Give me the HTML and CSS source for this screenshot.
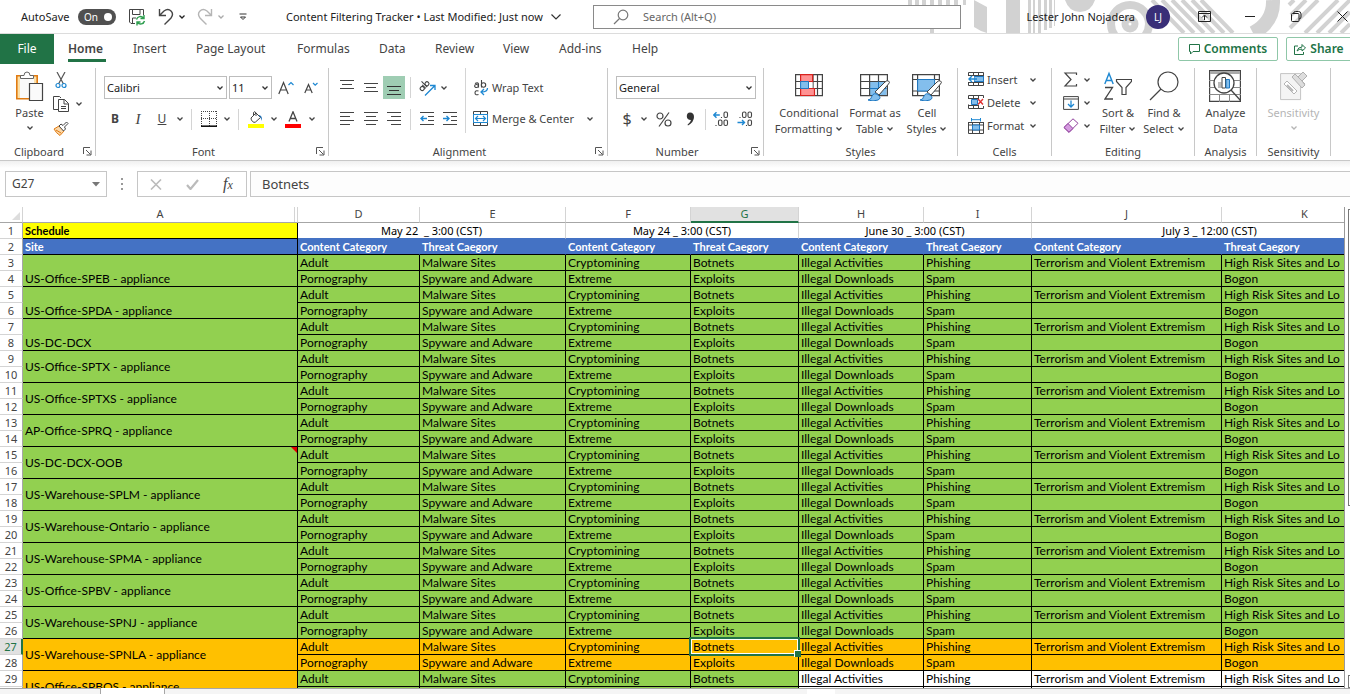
FILE: index.html
```html
<!DOCTYPE html>
<html lang="en">
<head>
<meta charset="utf-8">
<title>Content Filtering Tracker</title>
<link rel="stylesheet" href="styles.css">
</head>
<body>
<svg class="defs" aria-hidden="true">
  <symbol id="chev" viewBox="0 0 8 6"><path d="M1.5 1.5 4 4 6.500 1.500" fill="none" stroke="currentColor" stroke-width="1.300"/></symbol>
  <symbol id="launch" viewBox="0 0 9 9"><path d="M.5 7V.5H7M3 3l4.500 4.500M8 3.500V8H3.500" fill="none" stroke="currentColor"/></symbol>
</svg>

<header class="titlebar">
  <svg class="decor" viewBox="0 0 450 33" aria-hidden="true">
    <g fill="#d2d2d2">
      <path d="M8 0h4v5H8zM15 0h4v5h-4zM22 0h4v5h-4zM30 0h4v33h-4zM38 0h4v5h-4zM46 0h4v5h-4zM54 0h4v5h-4zM63 0h3v5h-3zM74 0l13 7v26l-6-2-7-4zM106 0h14v33h-14z"/>
      <path d="M128 0h3v33h-3zM133 0h2v33h-2zM138 0h3v33h-3zM144 0h3v30h-3zM149 0h3v28h-3zM154 0h1v26h-1z"/>
      <path d="M165 0h30q-4 12-15 12T165 0z"/>
    </g>
    <g fill="none" stroke="#d2d2d2">
      <circle cx="230" cy="24" r="19" stroke-width="8"/><circle cx="230" cy="24" r="5" stroke-width="7"/>
      <path d="M252 0 284 33M262 0l32 33M272 0l32 33M282 0l32 33M292 0l32 33M301 0l32 33" stroke-width="4"/>
      <path d="M373 0q1 22-20 33" stroke-width="14"/>
      <path d="M389 5l5-5M391 15 406 0M390 28 418 0M405 33 438 0M417 33l33-33M429 33l21-21M441 33l9-9" stroke-width="4"/>
    </g>
  </svg>
  <span class="autosave" id="as">AutoSave</span>
  <button class="toggle" role="switch" aria-checked="true" aria-labelledby="as">On<i></i></button>
  <button class="ic save" aria-label="Save"><svg width="18" height="18" viewBox="0 0 18 18" fill="none" stroke="#444"><path d="M7 15.500H3L1.500 14V1.500h14V7M4.500 1.500v5H12v-5M4.500 15v-5H8"/><path d="M8.500 11.500a4 4 0 0 1 7-1.500M16 7v3.500h-3.500M16.500 13a4 4 0 0 1-7 1.500M9 17.500V14h3.500" stroke="#2e9e4f" stroke-width="1.400"/></svg></button>
  <button class="ic undo" aria-label="Undo"><svg width="16" height="18" viewBox="0 0 16 18" fill="none" stroke="#444" stroke-width="1.400"><path d="M1.500 1v6.500H8M1.500 7.500 6 3q4-3 7 0t0 7l-6.500 6.500"/></svg></button>
  <button class="ic chv" aria-label="Undo history"><svg width="8" height="6"><use href="#chev"/></svg></button>
  <button class="ic redo" aria-label="Redo"><svg width="16" height="18" viewBox="0 0 16 18" fill="none" stroke="#b5b5b5" stroke-width="1.400"><path d="M14.500 1v6.500H8M14.500 7.500 10 3Q6 0 3 3t0 7l6.500 6.500"/></svg></button>
  <button class="ic chv faint" aria-label="Redo history"><svg width="8" height="6"><use href="#chev"/></svg></button>
  <button class="ic custom" aria-label="Customize toolbar"><svg width="8" height="8" viewBox="0 0 8 8" fill="none" stroke="#333"><path d="M.5 1h7M1.500 4 4 6.500 6.500 4z"/></svg></button>
  <button class="doc">Content Filtering Tracker • Last Modified: Just now <svg width="10" height="6" viewBox="0 0 10 6"><path d="M.5.5 5 5 9.500.5" fill="none" stroke="#333" stroke-width="1.200"/></svg></button>
  <label class="search"><svg width="16" height="16" viewBox="0 0 16 16" fill="none" stroke="#777" stroke-width="1.200"><circle cx="10" cy="6" r="4.800"/><path d="M6.500 9.500 1 15"/></svg><input type="text" placeholder="Search (Alt+Q)" aria-label="Search"></label>
  <div class="account">
    <span class="who">Lester John Nojadera</span><span class="avatar">LJ</span>
    <button class="ic" aria-label="Ribbon display options"><svg width="13" height="11" viewBox="0 0 13 11" fill="none" stroke="#222"><path d="M.5.5h12v10H.5zM.5 2.500h12M6.500 9V4.500M4 6.500l2.500-2.500L9 6.500"/></svg></button>
    <button class="ic" aria-label="Minimize"><svg width="10" height="10" viewBox="0 0 10 10"><path d="M0 4.500h10" stroke="#222"/></svg></button>
    <button class="ic" aria-label="Restore"><svg width="11" height="11" viewBox="0 0 11 11" fill="none" stroke="#222"><rect x=".5" y="2.500" width="7.500" height="8" rx="1"/><path d="M2.500 2.500q0-2 2-2h3q2.500 0 2.500 2.500v3q0 2-2 2"/></svg></button>
    <button class="ic" aria-label="Close"><svg width="11" height="11" viewBox="0 0 11 11"><path d="M.5.5l10 10M10.500.5l-10 10" stroke="#222"/></svg></button>
  </div>
</header>

<nav class="tabs">
  <button class="file">File</button>
  <a class="t1 on" href="#home">Home</a><a class="t2" href="#insert">Insert</a><a class="t3" href="#layout">Page Layout</a><a class="t4" href="#formulas">Formulas</a><a class="t5" href="#data">Data</a><a class="t6" href="#review">Review</a><a class="t7" href="#view">View</a><a class="t8" href="#addins">Add-ins</a><a class="t9" href="#help">Help</a>
  <span class="grow"></span>
  <button class="pill comments"><svg width="11" height="11" viewBox="0 0 11 11" fill="none" stroke="currentColor"><path d="M.5.5h10v7H4L1.500 10V7.500h-1z"/></svg>Comments</button>
  <button class="pill share"><svg width="12" height="12" viewBox="0 0 12 12" fill="none" stroke="currentColor"><path d="M4 3H.5v8.500h9V9M3 8q1-4 5-4V1.500l3.500 3.500L8 8V6Q5 6 3 8z"/></svg>Share</button>
</nav>

<section class="ribbon">
  <div class="group g-clip">
    <div class="body row">
      <button class="big paste"><svg width="28" height="30" viewBox="0 0 28 30" fill="none"><path d="M.8 4.800h20.400v23H.8z" stroke="#e07b12" stroke-width="1.600" fill="#fce0a8"/><path d="M4 7h14v20H4z" fill="#fafafa"/><path d="M4.500 7.500V4.500H8q0-3.500 3-3.500t3 3.500h3.500v3z" fill="#fff" stroke="#666"/><path d="M13.500 12.500h13v17h-13z" fill="#fafafa" stroke="#444" stroke-width="1.200"/></svg><span>Paste</span><svg class="cv" width="8" height="6"><use href="#chev"/></svg></button>
      <div class="col clipcol">
        <button class="ic" aria-label="Cut"><svg width="12" height="17" viewBox="0 0 12 17" fill="none"><path d="M2 0l6.500 12M10 0 3.500 12" stroke="#555" stroke-width="1.200"/><circle cx="3" cy="13.500" r="2" stroke="#1e88d2" stroke-width="1.200"/><circle cx="9" cy="13.500" r="2" stroke="#1e88d2" stroke-width="1.200"/></svg></button>
        <button class="ic" aria-label="Copy"><svg width="16" height="16" viewBox="0 0 16 16" fill="none" stroke="#444"><path d="M5 13.500H.5V.5h6L8 2"/><path d="M5.500 3.500h6l4 4v8h-10zM11 3.500V8h4.500M8 10.500h5M8 12.500h5"/></svg><svg class="cv" width="8" height="6"><use href="#chev"/></svg></button>
        <button class="ic" aria-label="Format Painter"><svg width="16" height="15" viewBox="0 0 16 15" fill="none"><path d="M1 8l5-3 5 5-4 4.500Q3 12 1 8z" fill="#fbd7a8" stroke="#e07b12"/><path d="M3 9l5 3" stroke="#e07b12"/><path d="M6 5l2-2 2 1.500L13.500 1 15 2.500 11.500 6l1 2-2 2z" stroke="#444" fill="#fff"/></svg></button>
      </div>
    </div>
    <div class="cap"><span>Clipboard</span><button class="ic ln" aria-label="Clipboard settings"><svg width="9" height="9"><use href="#launch"/></svg></button></div>
  </div>

  <div class="group g-font">
    <div class="body">
      <div class="row r1">
        <select class="sel w122" aria-label="Font"><option>Calibri</option></select><select class="sel w42" aria-label="Font size"><option>11</option></select>
        <button class="ic s28" aria-label="Increase font size"><svg width="16" height="14" viewBox="0 0 16 14" fill="none"><path d="M.8 13 5.500 1.500 10.200 13M2.500 9h6" stroke="#444" stroke-width="1.200"/><path d="M10.500 4l2.500-2.500L15.500 4" stroke="#1e88d2" stroke-width="1.200"/></svg></button><button class="ic s22" aria-label="Decrease font size"><svg width="14" height="12" viewBox="0 0 14 12" fill="none"><path d="M.8 11 4.500 2.500 8.200 11M2 8h5" stroke="#444" stroke-width="1.200"/><path d="M9 1l2.200 2.200L13.500 1" stroke="#1e88d2" stroke-width="1.200"/></svg></button>
      </div>
      <div class="row r2">
        <button class="ic s22 fb">B</button><button class="ic s24 fi">I</button><button class="ic s24 fu">U</button><button class="ic s12" aria-label="Underline style"><svg width="8" height="6"><use href="#chev"/></svg></button><i class="sep"></i>
        <button class="ic s24" aria-label="Borders"><svg width="16" height="16" viewBox="0 0 16 16" fill="none" stroke="#444"><path d="M0 .5h16M.5 0v15M15.500 0v15M8.500 0v15M0 7.500h16" stroke-dasharray="1 1"/><path d="M0 15.200h16" stroke="#111" stroke-width="1.600"/></svg></button><button class="ic s12" aria-label="Border options"><svg width="8" height="6"><use href="#chev"/></svg></button><i class="sep"></i>
        <button class="ic s24" aria-label="Fill color"><svg width="16" height="17" viewBox="0 0 16 17" fill="none"><path d="M3 7l5-5 4.500 4.500L7.500 11q-1.500 1-3-.5T3 7z" stroke="#444" fill="#fff"/><path d="M5.500 5V1.500Q7-.5 8 2v3" stroke="#444"/><path d="M11 4q4 1 2.500 6Q13 6 11 5z" fill="#1e6fb5"/><path d="M0 13h16v4H0z" fill="#ff0"/></svg></button><button class="ic s12" aria-label="Fill options"><svg width="8" height="6"><use href="#chev"/></svg></button>
        <button class="ic s26" aria-label="Font color"><svg width="16" height="17" viewBox="0 0 16 17" fill="none"><path d="M4 10.500 8 .8l4 9.700M5.500 7.500h5" stroke="#444" stroke-width="1.300"/><path d="M0 13h16v4H0z" fill="red"/></svg></button><button class="ic s12" aria-label="Font color options"><svg width="8" height="6"><use href="#chev"/></svg></button>
      </div>
    </div>
    <div class="cap"><span>Font</span><button class="ic ln" aria-label="Font settings"><svg width="9" height="9"><use href="#launch"/></svg></button></div>
  </div>

  <div class="group g-align">
    <div class="body row">
      <div class="aligns">
        <div class="row r1">
          <button class="ic s24" aria-label="Top align"><svg width="14" height="16" viewBox="0 0 14 16" stroke="#444"><path d="M0 .5h14M2 4.500h10M0 8.500h14"/></svg></button><button class="ic s24" aria-label="Middle align"><svg width="14" height="16" viewBox="0 0 14 16" stroke="#444"><path d="M0 3.500h14M2 7.500h10M0 11.500h14"/></svg></button><button class="ic s22 pressed" aria-label="Bottom align"><svg width="14" height="16" viewBox="0 0 14 16" stroke="#333"><path d="M0 6.500h14M2 10.500h10M0 14.500h14"/></svg></button><i class="sep"></i>
          <button class="ic s22" aria-label="Orientation"><svg width="17" height="16" viewBox="0 0 17 16" fill="none"><g transform="rotate(-45 5 6)" stroke="#444" stroke-width="1.100"><circle cx="2" cy="6.500" r="2"/><path d="M4.500 4v5M6.500 1v8"/><circle cx="8.700" cy="6.500" r="2"/></g><path d="M6 15.500 15.500 6M11 5.500h5V10" stroke="#1e88d2" stroke-width="1.300"/></svg></button><button class="ic s12" aria-label="Orientation options"><svg width="8" height="6"><use href="#chev"/></svg></button>
        </div>
        <div class="row r2">
          <button class="ic s24" aria-label="Align left"><svg width="14" height="14" viewBox="0 0 14 14" stroke="#444"><path d="M0 .5h14M0 4.500h10M0 8.500h14M0 12.500h10"/></svg></button><button class="ic s24" aria-label="Center"><svg width="14" height="14" viewBox="0 0 14 14" stroke="#444"><path d="M0 .5h14M2 4.500h10M0 8.500h14M2 12.500h10"/></svg></button><button class="ic s22" aria-label="Align right"><svg width="14" height="14" viewBox="0 0 14 14" stroke="#444"><path d="M0 .5h14M4 4.500h10M0 8.500h14M4 12.500h10"/></svg></button><i class="sep"></i>
          <button class="ic s22" aria-label="Decrease indent"><svg width="14" height="14" viewBox="0 0 14 14" fill="none" stroke="#444"><path d="M0 .5h14M8 4.500h6M8 8.500h6M0 12.500h14"/><path d="M1 6.500h6M3.500 4 1 6.500 3.500 9" stroke="#1e88d2" stroke-width="1.400"/></svg></button><button class="ic s24" aria-label="Increase indent"><svg width="14" height="14" viewBox="0 0 14 14" fill="none" stroke="#444"><path d="M0 .5h14M8 4.500h6M8 8.500h6M0 12.500h14"/><path d="M0 6.500h6M3.500 4 6 6.500 3.500 9" stroke="#1e88d2" stroke-width="1.400"/></svg></button>
        </div>
      </div>
      <div class="wraps">
        <button class="line r1"><svg width="16" height="18" viewBox="0 0 16 18" fill="none"><g stroke="#444" stroke-width="1.100"><path d="M2 4.500q3-1.500 3.500.5v3.500"/><ellipse cx="3.500" cy="7" rx="1.900" ry="1.500"/><path d="M8.500 1v7.500"/><circle cx="10.500" cy="6" r="2.200"/><path d="M5.500 12q-3.500-1-3.500 1.800t3.500 1.700"/></g><path d="M14.500 9q0 4-6 4M11 10l-3 3 3 3" stroke="#1e88d2" stroke-width="1.300"/></svg>Wrap Text</button>
        <button class="line r2"><svg width="16" height="16" viewBox="0 0 16 16" fill="none"><path d="M.5.5h14v14H.5zM7.500 0v4M7.500 11v4" stroke="#444"/><path d="M.5 3.500h14v8H.5z" fill="#fff" stroke="#1e88d2"/><path d="M2.500 7.500h10M5 5 2.500 7.500 5 10M10 5l2.500 2.500L10 10" stroke="#1e88d2" stroke-width="1.200"/></svg>Merge &amp; Center<svg class="cv end" width="8" height="6"><use href="#chev"/></svg></button>
      </div>
    </div>
    <div class="cap"><span>Alignment</span><button class="ic ln" aria-label="Alignment settings"><svg width="9" height="9"><use href="#launch"/></svg></button></div>
  </div>

  <div class="group g-num">
    <div class="body">
      <div class="row r1"><select class="sel w140" aria-label="Number format"><option>General</option></select></div>
      <div class="row r2">
        <button class="ic s22 sym">$</button><button class="ic s12" aria-label="Currency options"><svg width="8" height="6"><use href="#chev"/></svg></button><button class="ic s28" aria-label="Percent"><svg width="16" height="15" viewBox="0 0 16 15" fill="none" stroke="#444" stroke-width="1.200"><circle cx="4" cy="4" r="3"/><circle cx="12" cy="11" r="3"/><path d="M13 .5 3 14.500"/></svg></button><button class="ic s24" aria-label="Comma style"><svg width="9" height="14" viewBox="0 0 9 14"><path d="M4 .5q4 0 4 4.500 0 5-6 8.500l-.5-.8Q4.500 10.500 5 8 .8 8 .8 4.300.8.500 4 .5z" fill="#333"/></svg></button><i class="sep"></i>
        <button class="ic s24" aria-label="Increase decimal"><svg width="16" height="16" viewBox="0 0 16 16" fill="none" stroke="#444" stroke-width="1.100"><rect x="11" y="1" width="3.500" height="5.500" rx="1.500"/><path d="M8.500 6v1M3 14v1"/><rect x="5.500" y="9" width="3.500" height="5.500" rx="1.500"/><rect x="11" y="9" width="3.500" height="5.500" rx="1.500"/><path d="M.8 4h6M3.500 1.300.8 4l2.700 2.700" stroke="#1e88d2" stroke-width="1.400"/></svg></button><button class="ic s24" aria-label="Decrease decimal"><svg width="16" height="16" viewBox="0 0 16 16" fill="none" stroke="#444" stroke-width="1.100"><rect x="5.500" y="1" width="3.500" height="5.500" rx="1.500"/><rect x="11" y="1" width="3.500" height="5.500" rx="1.500"/><path d="M3 6v1M9.500 14v1"/><rect x="11" y="9" width="3.500" height="5.500" rx="1.500"/><path d="M.5 11.500h7M5 9l2.500 2.500L5 14" stroke="#1e88d2" stroke-width="1.400"/></svg></button>
      </div>
    </div>
    <div class="cap"><span>Number</span><button class="ic ln" aria-label="Number settings"><svg width="9" height="9"><use href="#launch"/></svg></button></div>
  </div>

  <div class="group g-styles">
    <div class="body row">
      <button class="big b78"><svg width="28" height="30" viewBox="0 0 28 30" fill="none"><path d="M.6 3.600h26.800v21H.6zM.6 10.500h27M.6 17.500h27M18 3.600v21M22.500 3.600v21" stroke="#444" stroke-width="1.200"/><path d="M5.600 3.600h12v7h-12zM5.600 17.500h13.900v7H5.600z" fill="#ff9292" stroke="#d8231f" stroke-width="1.200"/><path d="M5.600 10.500h7.900v7H5.600z" fill="#83beec" stroke="#1e78c2"/><path d="M14 11.100h3.500V17H14z" fill="#fff"/></svg><span>Conditional<br>Formatting <svg class="cv" width="8" height="6"><use href="#chev"/></svg></span></button>
      <button class="big b54"><svg width="30" height="30" viewBox="0 0 30 30" fill="none"><path d="M9.600 10.500h17v14h-17z" fill="#83beec"/><path d="M.6 3.600h26.800v21H.6zM.6 10.500h27M.6 17.500h9M9.600 3.600v21M18.500 3.600v7" stroke="#444" stroke-width="1.200"/><path d="M9.600 17.500h17M18.500 10.500v14" stroke="#1e78c2"/><path d="M28.500 10q2 1 0 3l-9.500 11-4-3L25 11q2-2 3.500-1z" fill="#fff" stroke="#444"/><path d="M8 29q3 0 4-4 2-4 6-1t0 5q-5 2-10 0z" fill="#83beec" stroke="#1e78c2"/></svg><span>Format as<br>Table <svg class="cv" width="8" height="6"><use href="#chev"/></svg></span></button>
      <button class="big b50"><svg width="30" height="30" viewBox="0 0 30 30" fill="none"><path d="M.6 3.600h26.800v21H.6zM.6 8.500h27M5.600 3.600v21M22.500 3.600v5M.6 20h27" stroke="#444" stroke-width="1.200"/><path d="M5.600 8.500h17V20h-17z" fill="#83beec" stroke="#1e78c2"/><path d="M28.500 10q2 1 0 3l-9.500 11-4-3L25 11q2-2 3.500-1z" fill="#fff" stroke="#444"/><path d="M8 29q3 0 4-4 2-4 6-1t0 5q-5 2-10 0z" fill="#83beec" stroke="#1e78c2"/></svg><span>Cell<br>Styles <svg class="cv" width="8" height="6"><use href="#chev"/></svg></span></button>
    </div>
    <div class="cap"><span>Styles</span></div>
  </div>

  <div class="group g-cells">
    <div class="body col">
      <button class="line"><svg width="16" height="15" viewBox="0 0 16 15" fill="none"><path d="M.5 4V.5h15v13H.5V10M5.500.5v13M10.500.5v13M.5 10.500h15M.5 3.500h15" stroke="#444"/><path d="M6 4.500h9.500v5H6z" fill="#83beec" stroke="#1e78c2"/><path d="M0 4h6v6H0z" fill="#fff"/><path d="M1 7h8M4 4 1 7l3 3" stroke="#1e88d2" stroke-width="1.400"/></svg>Insert<svg class="cv end" width="8" height="6"><use href="#chev"/></svg></button>
      <button class="line"><svg width="16" height="15" viewBox="0 0 16 15" fill="none"><path d="M.5 4V.5h15V3M.5 9.500v4h15V11M5.500.5v13M10.500.5V4M10.500 10v4M.5 3.500h10M.5 10.500h10" stroke="#444"/><path d="M3.500 4.500h6v5h-6z" fill="#83beec" stroke="#1e78c2"/><path d="M10 4l5 5.500M15 4l-5 5.500" stroke="#e03030" stroke-width="1.400"/></svg>Delete<svg class="cv end" width="8" height="6"><use href="#chev"/></svg></button>
      <button class="line"><svg width="16" height="16" viewBox="0 0 16 16" fill="none"><path d="M.5 4v11.500h15V4M4.500 4v11.500M11.500 4v11.500M.5 7h15M.5 12h15M.5 4.500h15" stroke="#444"/><path d="M4.500 7h7v5h-7z" fill="#83beec" stroke="#1e78c2"/><path d="M3.500 0v3.500M12.500 0v3.500M3.500 1.700h9" stroke="#1e88d2"/></svg>Format<svg class="cv end" width="8" height="6"><use href="#chev"/></svg></button>
    </div>
    <div class="cap"><span>Cells</span></div>
  </div>

  <div class="group g-edit">
    <div class="body row">
      <div class="col editcol">
        <button class="ic" aria-label="AutoSum"><svg width="16" height="15" viewBox="0 0 16 15" fill="none" stroke="#444" stroke-width="1.200"><path d="M13.500 3V1H2l6 6.500L2 14h11.500v-2"/></svg><svg class="cv" width="8" height="6"><use href="#chev"/></svg></button>
        <button class="ic" aria-label="Fill"><svg width="16" height="14" viewBox="0 0 16 14" fill="none"><path d="M.6.600h14.800v12.800H.6zM.6 3h14.800" stroke="#444"/><path d="M8 4.500V11M5 8l3 3 3-3" stroke="#1e88d2" stroke-width="1.300"/></svg><svg class="cv" width="8" height="6"><use href="#chev"/></svg></button>
        <button class="ic" aria-label="Clear"><svg width="16" height="15" viewBox="0 0 16 15" fill="none"><path d="M1 9.500 10 .8l5 4.500-9 9z" stroke="#8f3f9c" fill="#fff"/><path d="M1 9.500 5 5.500l5 5-4 3.800z" fill="#d59be0" stroke="#8f3f9c"/></svg><svg class="cv" width="8" height="6"><use href="#chev"/></svg></button>
      </div>
      <button class="big b46"><svg width="28" height="30" viewBox="0 0 28 30" fill="none"><path d="M.8 13 5 2.500 9.200 13M2.200 9.500h5.600" stroke="#1e88d2" stroke-width="1.400"/><path d="M1 16.500h7.500L1 28h8" stroke="#444" stroke-width="1.300"/><path d="M12.500 8.500h15v2l-5.500 6v7h-4v-7l-5.500-6z" stroke="#444" stroke-width="1.200"/></svg><span>Sort &amp;<br>Filter <svg class="cv" width="8" height="6"><use href="#chev"/></svg></span></button>
      <button class="big b44"><svg width="30" height="30" viewBox="0 0 30 30" fill="none" stroke="#444" stroke-width="1.200"><circle cx="19" cy="11" r="10"/><path d="M12 18 1 29"/></svg><span>Find &amp;<br>Select <svg class="cv" width="8" height="6"><use href="#chev"/></svg></span></button>
    </div>
    <div class="cap"><span>Editing</span></div>
  </div>

  <div class="group g-ana">
    <div class="body row ctr">
      <button class="big"><svg width="32" height="32" viewBox="0 0 32 32" fill="none"><path d="M.6.600h30.800v30.800H.6z" fill="#fff" stroke="#444" stroke-width="1.200"/><path d="M1 1h30v3H1z" fill="#aaa"/><path d="M0 10.500h32M0 17.500h32M0 24.500h32M10.500 24v8M20.500 24v8" stroke="#888"/><circle cx="15" cy="13" r="10" fill="#fff" stroke="#444" stroke-width="1.300"/><path d="M22 20l10 11" stroke="#444" stroke-width="1.300"/><path d="M9 12h3.500v6H9z" fill="#bbb"/><path d="M13 7.500h3.500v10.500H13z" fill="#fff" stroke="#444"/><path d="M17 9.500h3.500v8.500H17z" fill="#83beec" stroke="#1e78c2"/></svg><span>Analyze<br>Data</span></button>
    </div>
    <div class="cap"><span>Analysis</span></div>
  </div>

  <div class="group g-sens">
    <div class="body row ctr">
      <button class="big off" disabled><svg width="28" height="30" viewBox="0 0 28 30" fill="none"><path d="M.6 2.600h20v26H.6z" fill="#f4f4f4" stroke="#c4c4c4"/><path d="M4 13l3-3 10 10-3 3z" fill="#fff" stroke="#b5b5b5"/><path d="M7 14l6 6" stroke="#b5b5b5" stroke-width="2"/><path d="M12 6l3-3 3 3 5-5 4 4-5 5 3 4-3 3z" fill="#ddd" stroke="#b0b0b0"/><path d="M15 3 25 13" stroke="#b0b0b0"/></svg><span>Sensitivity</span><svg class="cv" width="8" height="6"><use href="#chev"/></svg></button>
    </div>
    <div class="cap"><span>Sensitivity</span></div>
  </div>
</section>

<section class="formula">
  <label class="namebox"><input type="text" value="G27" aria-label="Name box"><svg width="8" height="5" viewBox="0 0 8 5"><path d="M0 0h8L4 4.500z" fill="#777"/></svg></label>
  <i class="dots"></i>
  <div class="fx">
    <button class="ic" aria-label="Cancel"><svg width="12" height="11" viewBox="0 0 12 11"><path d="M1 .5l10 10M11 .5l-10 10" stroke="#bbb" stroke-width="1.600"/></svg></button><button class="ic" aria-label="Enter"><svg width="13" height="11" viewBox="0 0 13 11" fill="none"><path d="M1 6l3.500 4L12 1" stroke="#bbb" stroke-width="2.200"/></svg></button><button class="ic fn" aria-label="Insert function"><i>f<small>x</small></i></button>
  </div>
  <input class="fbar" type="text" value="Botnets" aria-label="Formula">
</section>

<main class="sheet">
  <div class="viewport">
    <table>
      <colgroup><col class="cn"><col class="cA"><col class="cD"><col class="cE"><col class="cF"><col class="cG"><col class="cH"><col class="cI"><col class="cJ"><col class="cK"></colgroup>
      <thead><tr><th class="corner"><svg width="8" height="8" viewBox="0 0 8 8"><path d="M8 0v8H0z" fill="#ddd"/></svg></th><th class="hA">A</th><th>D</th><th>E</th><th>F</th><th class="cur">G</th><th>H</th><th>I</th><th>J</th><th>K</th></tr></thead>
      <tbody id="rows">
        <tr class="sched"><th>1</th><td class="yellow">Schedule</td><td colspan="2">May 22 &nbsp;_ 3:00 (CST)</td><td colspan="2">May 24 _ 3:00 (CST)</td><td colspan="2">June 30 _ 3:00 (CST)</td><td colspan="2">July 3 _ 12:00 (CST)</td></tr>
        <tr class="heads"><th>2</th><td>Site</td><td>Content Category</td><td>Threat Caegory</td><td>Content Category</td><td>Threat Caegory</td><td>Content Category</td><td>Threat Caegory</td><td>Content Category</td><td>Threat Caegory</td></tr>
      </tbody>
    </table>
  </div>
  <div class="vscroll"><i class="thumb"></i><i class="down"></i></div>
</main>
<footer class="strip"><i class="tabgap"></i><i class="handle"></i></footer>
<script src="sheet.js"></script>
</body>
</html>
```

FILE: styles.css
```css
* { box-sizing: border-box; }
body { margin: 0; height: 100vh; display: flex; flex-direction: column; overflow: hidden; background: #fff; color: #333; font: 12px/16px "Noto Sans", "Open Sans", sans-serif; }
button, input, select { font: inherit; color: inherit; margin: 0; padding: 0; border: 0; background: none; }
a { color: inherit; text-decoration: none; }
svg { display: block; flex: none; }
.defs { position: absolute; width: 0; height: 0; }
.ic { display: flex; align-items: center; justify-content: center; flex: none; }
.row { display: flex; }
.col { display: flex; flex-direction: column; }
.grow { flex: 1; }

/* title bar */
.titlebar { position: relative; display: flex; align-items: center; height: 34px; flex: none; border-bottom: 1px solid #dcdcdc; font-size: 11px; color: #222; }
.decor { position: absolute; right: 0; top: 0; width: 450px; height: 33px; }
.autosave { width: 57px; margin-left: 21px; }
.toggle { display: flex; align-items: center; justify-content: space-between; width: 38px; height: 16px; padding: 0 4px 0 6px; border-radius: 8px; background: #505050; color: #fff; font-size: 10px; }
.toggle i { width: 8px; height: 8px; border-radius: 50%; background: #fff; }
.save { width: 42px; }
.undo { width: 16px; }
.chv { width: 16px; }
.redo { width: 16px; margin-left: 7px; }
.faint { color: #aaa; }
.custom { width: 28px; }
.doc { display: flex; align-items: center; gap: 8px; width: 307px; margin-left: 29px; white-space: nowrap; }
.search { position: relative; display: flex; align-items: center; flex: 1; max-width: 368px; height: 24px; border: 1px solid #8a8a8a; background: #fff; padding-left: 19px; gap: 14px; }
.search input { flex: 1; min-width: 0; outline: 0; }
.search input::placeholder { color: #666; opacity: 1; }
.account { position: relative; display: flex; align-items: center; margin: 0 -15px 0 auto; }
.account .ic { width: 46px; }
.who { white-space: nowrap; margin-right: 11px; }
.avatar { width: 24px; height: 24px; border-radius: 50%; background: #392f78; color: #fff; font-size: 10px; line-height: 24px; text-align: center; margin-right: 11px; }

/* tabs */
.tabs { display: flex; height: 30px; flex: none; align-items: center; font-size: 12px; color: #444; }
.file { width: 54px; height: 30px; background: #217346; color: #fff; margin-right: 14px; }
.tabs a { line-height: 20px; height: 25px; border-bottom: 3px solid transparent; white-space: nowrap; padding-top: 2px; margin-top: 1px; }
.tabs .on { width: 38px; border-color: #217346; font-weight: 600; }
.t1 { margin-right: 27px; }
.t2 { width: 63px; } .t3 { width: 101px; } .t4 { width: 82px; } .t5 { width: 56px; } .t6 { width: 68px; } .t7 { width: 56px; } .t8 { width: 73px; }
.pill { display: flex; align-items: center; justify-content: center; gap: 4px; height: 24px; flex: none; border: 1px solid #8fc7a8; border-radius: 2px; background: #fff; color: #217346; font-weight: 600; }
.comments { width: 100px; margin-right: 8px; }
.share { width: 66px; margin-right: -2px; }

/* ribbon */
.ribbon { display: flex; flex: none; height: 97px; padding: 4px 0; border-bottom: 1px solid #c8c8c8; font-size: 11px; color: #444; }
.group { display: flex; flex-direction: column; flex: none; border-right: 1px solid #c8c8c8; }
.body { flex: 1; }
.cap { display: flex; align-items: center; height: 9px; }
.cap span { flex: 1; text-align: center; }
.cap span:not(:last-child) { padding-right: 17px; }
.ln { width: 16px; margin-left: -16px; color: #555; }
.g-clip { width: 96px; } .g-font { width: 233px; } .g-align { width: 279px; } .g-num { width: 156px; } .g-styles { width: 194px; } .g-cells { width: 94px; } .g-edit { width: 143px; } .g-ana { width: 62px; } .g-sens { width: 74px; }
.r1, .r2 { display: flex; align-items: center; }
.r1 { padding-top: 4px; height: 35px; }
.r2 { height: 32px; }
.s12 { width: 12px; } .s22 { width: 22px; } .s24 { width: 24px; } .s26 { width: 26px; } .s28 { width: 28px; }
.sep { width: 1px; height: 21px; background: #d4d4d4; margin: 0 5px; }
.g-num .sep { margin: 0 3px; }
.sel { height: 23px; border: 1px solid #bdbdbd; background: #fff url("data:image/svg+xml,%3Csvg xmlns='http://www.w3.org/2000/svg' width='8' height='6'%3E%3Cpath d='M1.500 1.500 4 4 6.500 1.500' fill='none' stroke='%23333' stroke-width='1.300'/%3E%3C/svg%3E") no-repeat right 2px center; appearance: none; padding-left: 2px; color: #222; border-radius: 0; }
.w122 { width: 123px; margin-right: 2px; } .w42 { width: 43px; } .w140 { width: 140px; }
.g-font .body { padding-left: 8px; }
.g-align .body { padding-left: 6px; }
.g-num .body { padding-left: 8px; }
.fb { font-weight: 700; font-size: 12px; } .fi { font-family: "Liberation Serif", serif; font-style: italic; font-size: 15px; } .fu { font-size: 12px; text-decoration: underline; }
.sym { font-size: 16px; }
.pressed { background: #9fcdb3; height: 23px; }
.aligns { width: 131px; border-right: 1px solid #d4d4d4; margin: 0 7px 0 0; height: 65px; }
.wraps { flex: 1; }
.line { display: flex; align-items: center; gap: 3px; white-space: nowrap; }
.wraps .line { width: 121px; }
.end { margin-left: auto; }
.big { display: flex; flex-direction: column; align-items: center; white-space: nowrap; padding-top: 3px; }
.big > span { line-height: 16px; }
.big > svg:first-child { margin-bottom: 4px; }
.big .cv { display: inline-block; vertical-align: 1px; }
.paste { width: 41px; margin-left: 9px; }
.paste .cv, .off .cv { margin-top: 4px; }
.clipcol { padding-left: 3px; }
.clipcol .ic { height: 24px; width: 32px; gap: 6px; justify-content: flex-start; }
.clipcol .ic:first-child { padding-left: 2px; }
.g-styles .body { padding-left: 8px; }
.b78 { width: 74px; } .b54 { width: 58px; } .b50 { width: 46px; }
.g-cells .body { padding: 0 14px 0 10px; }
.g-cells .line { height: 23px; }
.editcol { width: 28px; margin-left: 11px; }
.editcol .ic { height: 23px; gap: 4px; }
.b46 { width: 54px; } .b44 { width: 38px; }
.ctr { justify-content: center; }
.g-ana .big { padding-top: 2px; } .g-ana .big > svg:first-child { margin-bottom: 3px; }
.off { color: #b5b5b5; }

/* formula bar */
.formula { display: flex; flex: none; height: 46px; padding: 10px 0 10px 5px; background: linear-gradient(#f0f0f0, #fff 7px); font-size: 12px; color: #444; }
.namebox { display: flex; align-items: center; width: 102px; border: 1px solid #c6c6c6; background: #fff; padding: 0 6px; }
.namebox input { flex: 1; min-width: 0; }
.dots { width: 2px; height: 12px; margin: 7px 14px; background: repeating-linear-gradient(#999 0 2px, transparent 2px 5px); }
.fx { display: flex; width: 110px; border: 1px solid #c6c6c6; background: #fff; margin-right: 3px; }
.fx .ic { width: 36px; }
.fn { font-family: "Liberation Serif", serif; font-size: 16px; }
.fn small { font-size: 12px; }
.fbar { flex: 1; min-width: 0; border: 1px solid #c6c6c6; border-right: 0; background: #fdfdfd; padding-left: 11px; font-size: 13px; }

/* sheet */
.sheet { display: flex; flex: 1; min-height: 0; }
.viewport { flex: 1; min-width: 0; overflow: hidden; border-right: 1px solid #999; }
table { table-layout: fixed; border-collapse: separate; border-spacing: 0; width: 100%; min-width: 1388px; color: #000; font: 12px/15px Lato, "Noto Sans", sans-serif; }
.cn { width: 23px; } .cA { width: 275px; } .cD { width: 122px; } .cE { width: 146px; } .cF { width: 125px; } .cG { width: 108px; } .cH { width: 125px; } .cI { width: 108px; } .cJ { width: 190px; }
td, th { height: 16px; padding: 0 2px; text-align: left; white-space: nowrap; border: 0 solid #000; border-width: 0 1px 1px 0; }
th { font: 11px/15px "Noto Sans", sans-serif; color: #444; text-align: center; border-color: #d4d4d4; padding: 0; }
thead th { border-bottom-color: #a6a6a6; line-height: 13px; padding-bottom: 2px; }
.corner svg { margin: 4px 0 0 12px; }
.hA { box-shadow: inset -2px 0 #fff, inset -3px 0 #d4d4d4; }
thead .cur { background: #e1e1e1; color: #217346; border-bottom: 2px solid #217346; padding-bottom: 1px; }
tbody th { border-right-color: #a6a6a6; }
tbody .cur { background: #e1e1e1; color: #217346; border-right: 2px solid #217346; }
.sched td { font: 11px/15px "Noto Sans", sans-serif; text-align: center; border-right-color: #d4d4d4; border-bottom-color: #4472c4; }
.sched td.yellow, .heads td { font: 700 11px/15px Lato, "Noto Sans", sans-serif; }
.sched td.yellow { background: #ff0; text-align: left; border-color: #000; }
.heads td { background: #4472c4; color: #fff; border-right-color: #4472c4; }
.heads td:nth-child(2) { border-right-color: #000; }
.green { background: #92d050; }
.orange { background: #ffc000; }
.low { vertical-align: bottom; }
.note, .selected { position: relative; }
.note::after { content: ""; position: absolute; top: 0; right: 0; border: 3px solid; border-color: #e00000 #e00000 transparent transparent; }
.selected::after { content: ""; position: absolute; inset: -2px; border: 2px solid #217346; box-shadow: inset 0 0 0 1px #fff; }
.selected::before { content: ""; position: absolute; z-index: 1; right: -3px; bottom: -3px; width: 6px; height: 6px; background: #217346; border: 1px solid #fff; border-width: 1px 0 0 1px; }
.vscroll { display: flex; flex-direction: column; justify-content: space-between; width: 5px; padding: 2px 0 0 3px; }
.vscroll i { border: 1px solid #777; border-right: 0; }
.thumb { height: 62%; }
.down { height: 13px; }
.strip { display: flex; flex: none; height: 6px; background: #f5f5f5; border-top: 1px solid #a6a6a6; }
.tabgap { width: 65px; margin: -1px 642px 0 100px; background: #fff; border: 1px solid #a6a6a6; border-width: 0 1px; }
.handle { width: 28px; background: #fff; }
```

FILE: sheet.js
```js
const sites = [
  'US-Office-SPEB - appliance', 'US-Office-SPDA - appliance', 'US-DC-DCX',
  'US-Office-SPTX - appliance', 'US-Office-SPTXS - appliance', 'AP-Office-SPRQ - appliance',
  'US-DC-DCX-OOB', 'US-Warehouse-SPLM - appliance', 'US-Warehouse-Ontario - appliance',
  'US-Warehouse-SPMA - appliance', 'US-Office-SPBV - appliance', 'US-Warehouse-SPNJ - appliance',
  'US-Warehouse-SPNLA - appliance', 'US-Office-SPBOS - appliance'
];
const pair = [
  ['Adult', 'Malware Sites', 'Cryptomining', 'Botnets', 'Illegal Activities', 'Phishing', 'Terrorism and Violent Extremism', 'High Risk Sites and Lo'],
  ['Pornography', 'Spyware and Adware', 'Extreme', 'Exploits', 'Illegal Downloads', 'Spam', '', 'Bogon']
];
const body = document.getElementById('rows');

function cell(row, tag, text, cls) {
  const el = document.createElement(tag);
  el.textContent = text;
  if (cls) el.className = cls;
  row.append(el);
  return el;
}

sites.forEach((site, s) => {
  pair.forEach((values, half) => {
    const number = 3 + s * 2 + half;
    const row = body.insertRow();
    cell(row, 'th', number, number === 27 ? 'cur' : '');
    if (half === 0) {
      const name = cell(row, 'td', site, s >= 12 ? 'orange' : 'green');
      name.rowSpan = 2;
      if (s < 3) name.classList.add('low');
      if (site === 'US-DC-DCX-OOB') name.classList.add('note');
    }
    values.forEach((text, c) => {
      let fill = 'green';
      if (s === 12) fill = 'orange';
      if (s === 13 && c > 3) fill = '';
      const td = cell(row, 'td', text, fill);
      if (number === 27 && c === 3) td.classList.add('selected');
    });
  });
});
```
